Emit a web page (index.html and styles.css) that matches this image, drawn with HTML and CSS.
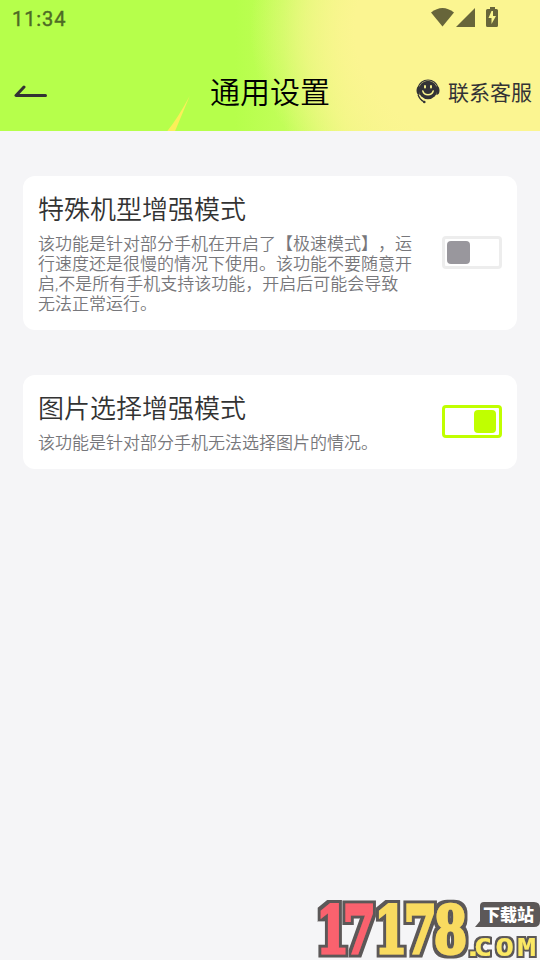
FILE: index.html
```html
<!DOCTYPE html>
<html lang="zh-CN">
<head>
<meta charset="utf-8">
<title>通用设置</title>
<link rel="stylesheet" href="styles.css">
</head>
<body>
<header class="header">
  <svg class="spark" viewBox="0 0 24 36"><path d="M23 0 8 36H0Q10 24 23 0Z" fill="#fbef59"/></svg>
  <div class="status">
    <span class="time">11:34</span>
    <svg class="status-icons" viewBox="0 0 68 22" fill="#67653a">
      <path d="M0 5.5Q11.5-3.5 23 5.5L11.5 19.5Z"/>
      <path d="M44 1V20H25Z"/>
      <path d="M59 0h5v2h1.500q1.500 0 1.500 1.500v15q0 1.500-1.500 1.500h-9q-1.500 0-1.500-1.500v-15q0-1.500 1.500-1.500H59Z"/>
      <path d="M60.500 4 57.500 11h3v6l4.500-8h-3V4Z" fill="#faf68e"/>
    </svg>
  </div>
  <nav class="bar">
    <svg class="back" viewBox="0 0 34 14"><path d="M10 2 2 10.500H31.500" fill="none" stroke="#333333" stroke-width="3" stroke-linecap="round" stroke-linejoin="round"/></svg>
    <h1 class="title">通用设置</h1>
    <div class="service">
      <svg class="service-icon" viewBox="0 0 24 25">
        <circle cx="12" cy="11" r="9.300" fill="#333336"/>
        <path d="M1.800 9A10.500 10.500 0 0 1 22.200 9" fill="none" stroke="#333336" stroke-width="1.200"/>
        <path d="M3.500 7Q.5 7.500 .5 11.500T3.500 16ZM20.500 7Q23.500 7.500 23.500 11.500T20.500 16Z" fill="#333336"/>
        <path d="M2 15.500Q3.500 20.500 8.300 23" fill="none" stroke="#333336" stroke-width="1.300"/>
        <circle cx="8.300" cy="23" r="1.300" fill="#333336"/>
        <path d="M6.800 12Q8 15.800 12 15.800T17.200 12" fill="none" stroke="#faf68e" stroke-width="1.500" stroke-linecap="round"/>
        <path d="M9 7v1.500M15 7v1.500" stroke="#faf68e" stroke-width="1.900" stroke-linecap="round"/>
      </svg>
      <span>联系客服</span>
    </div>
  </nav>
</header>
<main class="list">
  <section class="card">
    <div class="copy">
      <h2>特殊机型增强模式</h2>
      <p>该功能是针对部分手机在开启了【极速模式】，运<br>行速度还是很慢的情况下使用。该功能不要随意开<br>启,不是所有手机支持该功能，开启后可能会导致<br>无法正常运行。</p>
    </div>
    <div class="switch"><i></i></div>
  </section>
  <section class="card">
    <div class="copy">
      <h2>图片选择增强模式</h2>
      <p>该功能是针对部分手机无法选择图片的情况。</p>
    </div>
    <div class="switch on"><i></i></div>
  </section>
</main>
<svg class="mark" viewBox="0 0 224 62">
  <filter id="outline" x="-10%" y="-10%" width="120%" height="120%">
    <feMorphology in="SourceAlpha" operator="dilate" radius="3" result="grown"/>
    <feFlood flood-color="#5c5858"/>
    <feComposite in2="grown" operator="in"/>
    <feMerge><feMergeNode/><feMergeNode in="SourceGraphic"/></feMerge>
  </filter>
  <filter id="outline-small" x="-10%" y="-20%" width="120%" height="140%">
    <feMorphology in="SourceAlpha" operator="dilate" radius="2" result="grown"/>
    <feFlood flood-color="#5c5858"/>
    <feComposite in2="grown" operator="in"/>
    <feMerge><feMergeNode/><feMergeNode in="SourceGraphic"/></feMerge>
  </filter>
  <g filter="url(#outline)">
    <text class="digits" transform="scale(.72 1)" x="0 37 81 122 164" y="55"><tspan class="red">17</tspan>178</text>
  </g>
  <path d="M168 4H218q6 0 6 6v13q0 6-6 6H159l5-6V8q0-4 4-4Z" fill="#5c5858"/>
  <text class="tag" x="167" y="23">下载站</text>
  <g filter="url(#outline-small)">
    <text class="com" transform="scale(1.250 1)" x="118 126 143.500 161" y="58">.COM</text>
  </g>
</svg>
</body>
</html>
```
FILE: styles.css
```css
* { box-sizing: border-box; }
body {
  margin: 0;
  height: 960px;
  overflow: hidden;
  position: relative;
  background: #f5f5f7;
  font-family: "Noto Sans CJK SC", sans-serif;
  text-spacing-trim: space-all;
}
h1, h2, p { margin: 0; font-weight: 350; }
.header {
  position: relative;
  height: 131px;
  background:
    radial-gradient(ellipse 250px 190px at 510px 30px, #fbf591 0, #fbf591 62%, rgba(251,245,145,.6) 82%, rgba(251,245,145,0) 104%),
    linear-gradient(90deg, #b6ff4b 0, #b6ff4b 235px, #c2fe59 285px, #e8fa7a 345px, #faf68e 410px);
}
.spark { position: absolute; left: 167px; top: 96px; width: 24px; height: 35px; }
.status {
  display: flex;
  justify-content: space-between;
  align-items: flex-start;
  height: 54px;
  padding: 7px 41px 0 12px;
}
.time {
  font: 400 20px/24px Roboto, sans-serif;
  letter-spacing: .9px;
  color: #4e6b25;
  -webkit-text-stroke: .4px #4e6b25;
}
.status-icons { width: 68px; height: 22px; }
.bar {
  display: grid;
  grid-template-columns: 1fr 120px 1fr;
  align-items: center;
  height: 74px;
  padding: 0 8px 0 14px;
}
.back { width: 34px; height: 14px; margin-top: 2px; }
.title { font-size: 30px; line-height: 40px; color: #000; margin-left: -3px; margin-top: -3px; white-space: nowrap; }
.service {
  display: flex;
  justify-content: flex-end;
  align-items: center;
  gap: 8px;
  font-size: 21px;
  line-height: 30px;
  white-space: nowrap;
  color: #333336;
}
.service-icon { width: 24px; height: 25px; }
.list {
  display: flex;
  flex-direction: column;
  gap: 45px;
  padding: 45px 23px;
}
.card {
  display: flex;
  justify-content: space-between;
  align-items: center;
  padding: 14px 15px 16px;
  border-radius: 12px;
  background: #fff;
}
.copy h2 { font-size: 26px; line-height: 36px; height: 44px; color: #333; }
.copy p { font-family: Roboto, "Noto Sans CJK SC", sans-serif; font-size: 17px; line-height: 20px; color: #77777b; white-space: nowrap; }
.switch {
  display: flex;
  align-items: center;
  flex: none;
  width: 60px;
  height: 33px;
  padding: 0 2px;
  border: 3px solid #ededed;
  border-radius: 4px;
}
.switch i { width: 23px; height: 23px; border-radius: 4px; background: #99979d; }
.switch.on { justify-content: flex-end; padding-right: 3px; border-color: #c0ff00; }
.switch.on i { width: 22px; background: #c0ff00; }
.mark { position: absolute; left: 316px; top: 898px; width: 224px; height: 62px; }
.digits { font: bold 66px "DejaVu Serif", serif; fill: #f9db61; stroke: #f9db61; stroke-width: 3px; }
.red { fill: #fa626e; stroke: #fa626e; }
.com { font: bold 25px "DejaVu Sans Mono", monospace; fill: #fbe863; }
.tag { font: 900 17px "Noto Sans CJK SC", sans-serif; fill: #fff; }
```
